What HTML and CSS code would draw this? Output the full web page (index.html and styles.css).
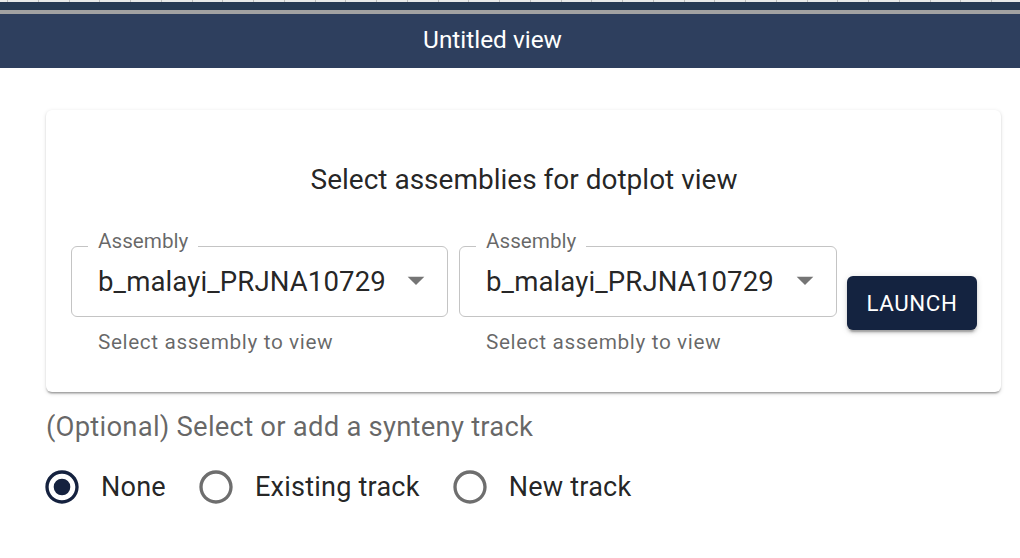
FILE: index.html
```html
<!DOCTYPE html>
<html>
<head>
<meta charset="utf-8">
<link rel="stylesheet" href="styles.css">
</head>
<body>
<div class="ruler"></div>
<div class="darkbar"></div>
<div class="greybar"></div>
<header class="viewbar">Untitled view</header>
<main class="content">
  <section class="card">
    <h2 class="card-title">Select assemblies for dotplot view</h2>
    <div class="row">
      <div class="field field-a">
        <div class="select">
          <span class="float-label">Assembly</span>
          <span class="value">b_malayi_PRJNA10729</span>
          <svg class="arrow" viewBox="0 0 24 24" width="40" height="40"><path d="M7 10l5 5 5-5z" fill="#757575"/></svg>
        </div>
        <div class="helper">Select assembly to view</div>
      </div>
      <div class="field field-b">
        <div class="select">
          <span class="float-label">Assembly</span>
          <span class="value">b_malayi_PRJNA10729</span>
          <svg class="arrow" viewBox="0 0 24 24" width="40" height="40"><path d="M7 10l5 5 5-5z" fill="#757575"/></svg>
        </div>
        <div class="helper">Select assembly to view</div>
      </div>
      <button class="launch">LAUNCH</button>
    </div>
  </section>
  <p class="optional">(Optional) Select or add a synteny track</p>
  <div class="radios">
    <label class="radio radio-checked">
      <svg viewBox="0 0 24 24" width="40" height="40"><path fill="#15223f" d="M12 2C6.48 2 2 6.48 2 12s4.48 10 10 10 10-4.480 10-10S17.52 2 12 2zm0 18c-4.42 0-8-3.58-8-8s3.58-8 8-8 8 3.58 8 8-3.58 8-8 8z"/><circle cx="12" cy="12" r="5" fill="#15223f"/></svg>
      <span>None</span>
    </label>
    <label class="radio">
      <svg viewBox="0 0 24 24" width="40" height="40"><path fill="#6e6e6e" d="M12 2C6.48 2 2 6.48 2 12s4.48 10 10 10 10-4.48 10-10S17.52 2 12 2zm0 18c-4.42 0-8-3.58-8-8s3.58-8 8-8 8 3.58 8 8-3.58 8-8 8z"/></svg>
      <span>Existing track</span>
    </label>
    <label class="radio">
      <svg viewBox="0 0 24 24" width="40" height="40"><path fill="#6e6e6e" d="M12 2C6.48 2 2 6.48 2 12s4.48 10 10 10 10-4.48 10-10S17.52 2 12 2zm0 18c-4.42 0-8-3.58-8-8s3.58-8 8-8 8 3.58 8 8-3.58 8-8 8z"/></svg>
      <span>New track</span>
    </label>
  </div>
</main>
</body>
</html>
```
FILE: styles.css
```css
* { box-sizing: border-box; }
html, body { margin: 0; padding: 0; background: #fff; }
body { font-family: Roboto, "Liberation Sans", sans-serif; color: rgba(0,0,0,0.87); width: 1020px; height: 558px; overflow: hidden; }

.ruler {
  height: 2px;
  background-color: #e9e9e9;
  background-image: repeating-linear-gradient(90deg, transparent 0, transparent 7px, #bdbdbd 7px, #bdbdbd 8px, transparent 8px, transparent 30.75px);
}
.darkbar { height: 8px; background: #273953; }
.greybar { height: 4px; background: #a2a2a2; }
.viewbar {
  height: 54px;
  background: #2e3f5e;
  color: #fff;
  font-size: 24.4px;
  line-height: 52px;
  text-align: center;
  padding-right: 35px;
}

.content { padding: 0 19px 0 46px; }

.card {
  margin-top: 42px;
  background: #fff;
  border-radius: 6px;
  box-shadow: 0 3px 1.5px -2px rgba(0,0,0,0.2), 0 1.5px 1.5px 0 rgba(0,0,0,0.14), 0 1.5px 4.5px 0 rgba(0,0,0,0.12);
  padding: 52px 24px 40px 25px;
}
.card-title {
  margin: 0;
  font-size: 28px;
  font-weight: 400;
  line-height: 36px;
  text-align: center;
  color: rgba(0,0,0,0.87);
}

.row { display: flex; align-items: flex-start; margin-top: 48px; }
.field-a { width: 377px; }
.field-b { width: 378px; margin-left: 11px; }

.select {
  position: relative;
  height: 71px;
  border: 1.5px solid #c4c4c4;
  border-radius: 6px;
  display: flex;
  align-items: center;
  padding-left: 26px;
}
.float-label {
  position: absolute;
  top: -16px;
  left: 16px;
  padding: 0 10px;
  background: #fff;
  font-size: 20.7px;
  line-height: 20px;
  color: rgba(0,0,0,0.6);
}
.value { font-size: 27.6px; line-height: 32px; color: rgba(0,0,0,0.87); letter-spacing: 0.1px; }
.arrow { position: absolute; right: 11.5px; top: 13px; }

.helper {
  margin-top: 15px;
  padding-left: 27px;
  font-size: 20.8px;
  line-height: 20px;
  color: rgba(0,0,0,0.6);
  letter-spacing: 0.6px;
}

.launch {
  margin-left: 10px;
  margin-top: 30px;
  width: 130px;
  height: 54px;
  border: 0;
  border-radius: 6px;
  background: #142340;
  color: #fff;
  font-family: Roboto, "Liberation Sans", sans-serif;
  font-size: 22.3px;
  font-weight: 400;
  letter-spacing: 0.6px;
  box-shadow: 0 4.5px 1.5px -3px rgba(0,0,0,0.2), 0 3px 3px 0 rgba(0,0,0,0.14), 0 1.5px 7.5px 0 rgba(0,0,0,0.12);
}

.optional {
  margin: 17px 0 0 0;
  font-size: 27.5px;
  line-height: 36px;
  color: rgba(0,0,0,0.6);
  letter-spacing: 0.2px;
}

.radios { display: flex; align-items: center; margin-top: 22px; margin-left: -4px; }
.radio { display: flex; align-items: center; margin-right: 30px; font-size: 27.1px; line-height: 40px; }
.radio svg { display: block; }
.radio span { margin-left: 19px; letter-spacing: 0.2px; }
```
